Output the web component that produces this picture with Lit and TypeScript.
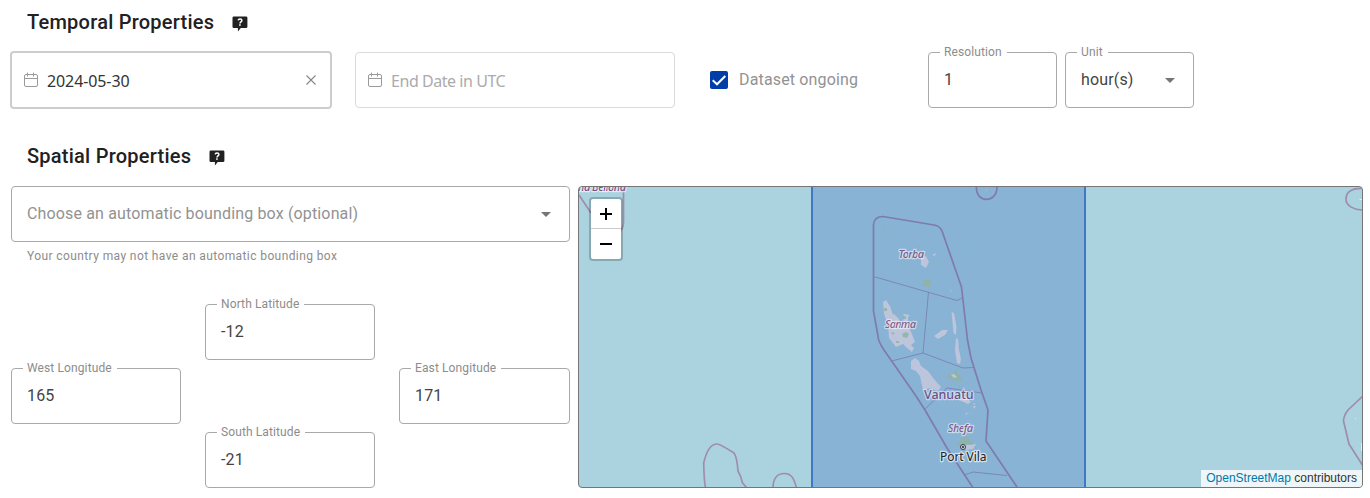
import { LitElement, html, css, svg } from "lit";
import { customElement, property } from "lit/decorators.js";

const helpIcon = html`<svg class="help" width="16" height="16" viewBox="0 0 16 16" aria-hidden="true">
  <path fill="#212121" d="M2 .4h12a1.400 1.400 0 0 1 1.400 1.400v8.900a1.400 1.400 0 0 1-1.400 1.400H8.800L5.900 15.400V12.100H2A1.400 1.400 0 0 1 .5 10.700V1.800A1.400 1.400 0 0 1 2 .4z" />
  <path fill="none" stroke="#fff" stroke-width="1.500" d="M6.200 4.400C6.400 2.600 9.900 2.600 9.900 4.600C9.900 5.900 8.100 6 8 7.500" />
  <rect x="7.100" y="8.300" width="1.600" height="1.500" fill="#fff" />
</svg>`;

const calendarIcon = html`<svg class="cal" width="16" height="16" viewBox="0 0 16 16" fill="none" stroke="#9a9a9a" aria-hidden="true">
  <rect x="1.500" y="2.500" width="13" height="12" rx="1.500" />
  <path d="M1.500 6.500h13M4.500 .6v4M10.500 .6v4" />
</svg>`;

@customElement("outlined-field")
export class OutlinedField extends LitElement {
  @property() label = "";
  @property() value = "";
  @property() placeholder = "";
  @property({ type: Boolean }) select = false;

  static styles = css`
    :host { display: block; }
    .box {
      position: relative; box-sizing: border-box; height: 56px; padding: 0 15px;
      border: 1px solid #a9a9a9; border-radius: 4px;
      display: flex; align-items: center; justify-content: space-between;
      font-size: 16px; letter-spacing: 0.15px; color: #444;
    }
    .label {
      position: absolute; top: -8px; left: 11px; padding: 0 5px 0 4px; background: #fff;
      font-size: 12px; line-height: 14px; letter-spacing: 0.1125px; color: #8c8c8c; white-space: nowrap;
    }
    .value { line-height: 24px; padding-bottom: 1px; white-space: nowrap; }
    .hint { color: #929292; }
    .arrow { margin-right: 3px; }
  `;

  render() {
    return html`<div class="box">
      ${this.label ? html`<span class="label">${this.label}</span>` : null}
      <span class="value ${this.value ? "" : "hint"}">${this.value || this.placeholder}</span>
      ${this.select
        ? html`<svg class="arrow" width="10" height="5" viewBox="0 0 10 5"><path d="M0 0h10L5 5z" fill="#757575" /></svg>`
        : null}
    </div>`;
  }
}

@customElement("bounds-map")
export class BoundsMap extends LitElement {
  static styles = css`
    :host { display: block; }
    .map {
      position: relative; box-sizing: border-box; height: 302px; overflow: hidden;
      border: 1px solid #757575; border-radius: 4px; background: #aad3df;
    }
    .canvas { display: block; width: 100%; height: 300px; }
    .zoom {
      position: absolute; left: 10px; top: 10px; border: 2px solid rgba(0, 0, 0, 0.2);
      border-radius: 4px; background: #fff; background-clip: padding-box; overflow: hidden;
    }
    .key { box-sizing: border-box; display: flex; align-items: center; justify-content: center; width: 30px; height: 30px; }
    .plus { border-bottom: 1px solid #ccc; padding-top: 1px; }
    .credit {
      position: absolute; right: 0; bottom: 0; padding: 0 5px; background: rgba(255, 255, 255, 0.8);
      font: 12px/17px "Liberation Sans", Arial, sans-serif; color: #333;
    }
    .link { color: #0078a8; }
    .border { fill: none; stroke: #a08cae; stroke-width: 1.700; stroke-linejoin: round; }
    .inner { fill: none; stroke: #9b94b7; stroke-width: 0.900; }
    .land { fill: #f0ebe9; opacity: 0.930; }
    .green { fill: #b5d3a0; opacity: 0.850; }
    .name {
      font-family: "Noto Sans", sans-serif; paint-order: stroke; stroke: rgba(255, 255, 255, 0.6);
      stroke-width: 2.500px; stroke-linejoin: round; fill: #7e4c83;
    }
    .region { font-size: 11px; font-style: italic; font-weight: 500; }
    .country { font-size: 12.500px; font-weight: 500; fill: #6b3f80; letter-spacing: 0.3px; }
    .city { font-size: 12px; fill: #222; }
  `;

  render() {
    return html`<div class="map">
      <svg class="canvas" viewBox="579 187 783 300" preserveAspectRatio="none">${this.chart()}</svg>
      <div class="zoom">
        <div class="key plus"><svg width="12" height="12" viewBox="0 0 12 12"><path d="M6 0v12M0 6h12" stroke="#000" stroke-width="2" /></svg></div>
        <div class="key"><svg width="12" height="12" viewBox="0 0 12 12"><path d="M0 6h12" stroke="#000" stroke-width="2" /></svg></div>
      </div>
      <div class="credit"><span class="link">OpenStreetMap</span> contributors</div>
    </div>`;
  }

  private chart() {
    return svg`
      <g class="border">
        <path d="M579 195L591 213M623.500 187V222Q623.500 229 619 232" />
        <path d="M705.500 488Q704 480 703.700 463Q708 444 717 444Q720 444 734 453Q737 457 738 471Q741 476 742.500 483L747 488" />
        <path d="M773 488C773 479 777 473.500 784.500 473.500C792 473.500 794 479 796.500 488" />
        <path d="M1363 188.500C1349 188 1346 194 1346 199C1346 206 1354 210 1363 210" />
        <path d="M1363 396L1348 410Q1343.500 416 1343.500 421L1349 444L1363 466" />
        <path d="M976.500 187C975 203 997 204 997 187" />
        <path d="M972.500 487L947 448L925 410L916 396L884 350Q878 341 878 336L873.500 311V225Q874 216.500 883 216.500L934 225Q940 226 942 231L961.500 287L967.500 340L971 358L981 390L988 410L986 441L1017 487" />
      </g>
      <g class="inner">
        <path d="M873.500 276.500L957 300.500L962 298M928.500 292L923 353L891.500 361M923 353L963 368L974 367.500" />
        <path d="M924 410L947 388L982 393M964 475L973 472L1007 475.500" />
      </g>
      <g class="land">
        <path d="M883 302L886 300L890 306L892 312L898 318L903 325L904 314L908 316L908 325L912 334L915 342L911 345L914 348L912 352L907 348L903 344L896 347L889 338L888 325L884 314Z" />
        <path d="M903 314L910 315L908 317L904 316ZM934 336L942 330L948 330L945 335L938 339Z" />
        <path d="M951.500 312L954 313L956.500 327L956 335L953.500 333ZM956 338L958 339L959 350L961 359L960 364L957 363L955 350Z" />
        <path d="M911 361L915 358L919 361L921 366L928 371L934 379L941 387L938 391L930 388L923 390L920 376L916 371L911 369Z" />
        <path d="M921 258L926 256L929 262L926 268L921 265ZM932 255L936 253L935 256ZM957 399L965 396L971 402L968 404L961 401ZM973 406L976 406L974 409ZM965 414L969 412L966 415ZM963 387L965 388L964 390Z" />
        <path d="M965 445L976 444L973 449L966 450ZM973 404L975 403L975 405ZM950 290L952 291L951 292ZM986 189.500h1v1h-1ZM1359.500 199h3v1h-3ZM1355 418h1v1h-1ZM1361 443h1v8h-1Z" />
      </g>
      <g class="green">
        <path d="M923 280L930 279L931 284L929 287L923 286ZM882.500 227L884 227L884 231L882.500 230ZM885 233L887 233L887 236L885 235ZM888 240L890 242L889 244ZM917 247L920 246L919 249ZM934 262h1v1h-1Z" />
        <path d="M902 334L906 332L909 334L907 338L903 337ZM884 308L887 308L887 311L884 311ZM892 311L894 312L893 316ZM903 316h3v3h-3ZM891 332L895 333L893 335ZM896 341h3v2h-3Z" />
        <path d="M945 376L952 374L956 369L959 375L963 380L958 381L950 379ZM957 445L960 440L966 436L972 442L973 445L965 444L959 446ZM958 386L961 385L959 388Z" />
      </g>
      <path class="land" d="M951 375L954 374L957 377L954 378Z" />
      <rect x="812" y="180" width="273" height="320" fill="#0038a8" fill-opacity="0.200" />
      <g class="name">
        <text class="region" x="578" y="191" textLength="48">nd Bellona</text>
        <g opacity="0.850">
          <text class="region" x="898.500" y="258" textLength="25.500">Torba</text>
          <text class="region" x="885" y="328" textLength="31">Sanma</text>
          <text class="region" x="948" y="432" textLength="25">Shefa</text>
          <text class="country" x="924" y="399" textLength="50">Vanuatu</text>
        </g>
        <text class="city" x="940" y="461" textLength="46.500">Port Vila</text>
      </g>
      <circle cx="963" cy="447" r="2.500" fill="#d4dbe6" stroke="#2a3040" stroke-width="0.900" />
      <circle cx="963" cy="447" r="1" fill="#222" />
      <path d="M812 187V487M1085 187V487" stroke="#3f78c4" stroke-width="2" />
    `;
  }
}

@customElement("app-root")
export class AppRoot extends LitElement {
  static styles = css`
    :host { display: block; height: 498px; overflow: hidden; background: #fff; font-family: Roboto, sans-serif; }
    .page { box-sizing: border-box; padding: 8px 7px 0 11px; }
    .title {
      display: flex; align-items: center; height: 28px; margin: 0; padding-left: 16px;
      font-size: 20px; font-weight: 500; letter-spacing: 0.24px; color: #212121;
    }
    .help { margin: 3px 0 0 17.5px; }
    .row { display: flex; height: 56px; margin-top: 16px; margin-bottom: 34px; }
    .date {
      box-sizing: border-box; display: flex; align-items: center; border-radius: 4px;
      font: 16px "Noto Sans", sans-serif; color: #333;
    }
    .start { width: 322px; height: 58px; margin: -1px 23px 0 -1px; padding: 0 11px; border: 2px solid #cdcdcd; }
    .start .text { letter-spacing: -0.1px; }
    .end { width: 320px; padding: 0 12px 0 11px; border: 1px solid #dadada; color: #ababab; }
    .end .text { letter-spacing: -0.45px; }
    .cal { margin-right: 8px; }
    .text { flex: 1; padding-top: 2px; }
    .check { display: flex; align-items: center; width: 218px; margin-left: 35px; font-size: 16px; letter-spacing: 0.15px; color: #929292; }
    .caption { padding-bottom: 1px; }
    .tick { margin-right: 11px; }
    .res { width: 129px; margin-right: 8px; }
    .columns { display: grid; grid-template-columns: 559px 785px; gap: 8px; margin-top: 16px; }
    .note { margin: 7px 16px 0; font-size: 12px; line-height: 14px; letter-spacing: 0.4px; color: #8c8c8c; }
    .compass { display: grid; grid-template-columns: 170px 170px 171px; gap: 8px 24px; margin-top: 41px; }
    .n, .s { grid-column: 2; }
    .w { grid-column: 1; }
    .e { grid-column: 3; }
  `;

  render() {
    return html`<div class="page">
      <h2 class="title">Temporal Properties ${helpIcon}</h2>
      <div class="row">
        <div class="date start">${calendarIcon}<span class="text">2024-05-30</span>
          <svg width="16" height="16" viewBox="0 0 16 16"><path d="M3.500 3.500l9 9M12.500 3.500l-9 9" stroke="#858585" stroke-width="1.100" /></svg>
        </div>
        <div class="date end">${calendarIcon}<span class="text">End Date in UTC</span></div>
        <div class="check">
          <svg class="tick" width="18" height="18" viewBox="0 0 18 18"><rect width="18" height="18" rx="2" fill="#003da6" /><path d="M2.700 9.200L7 13.300L15.300 5" fill="none" stroke="#fff" stroke-width="2" /></svg>
          <span class="caption">Dataset ongoing</span>
        </div>
        <outlined-field class="res" label="Resolution" value="1"></outlined-field>
        <outlined-field class="res" label="Unit" value="hour(s)" select></outlined-field>
      </div>
      <h2 class="title">Spatial Properties ${helpIcon}</h2>
      <div class="columns">
        <div>
          <outlined-field placeholder="Choose an automatic bounding box (optional)" select></outlined-field>
          <p class="note">Your country may not have an automatic bounding box</p>
          <div class="compass">
            <outlined-field class="n" label="North Latitude" value="-12"></outlined-field>
            <outlined-field class="w" label="West Longitude" value="165"></outlined-field>
            <outlined-field class="e" label="East Longitude" value="171"></outlined-field>
            <outlined-field class="s" label="South Latitude" value="-21"></outlined-field>
          </div>
        </div>
        <bounds-map></bounds-map>
      </div>
    </div>`;
  }
}
